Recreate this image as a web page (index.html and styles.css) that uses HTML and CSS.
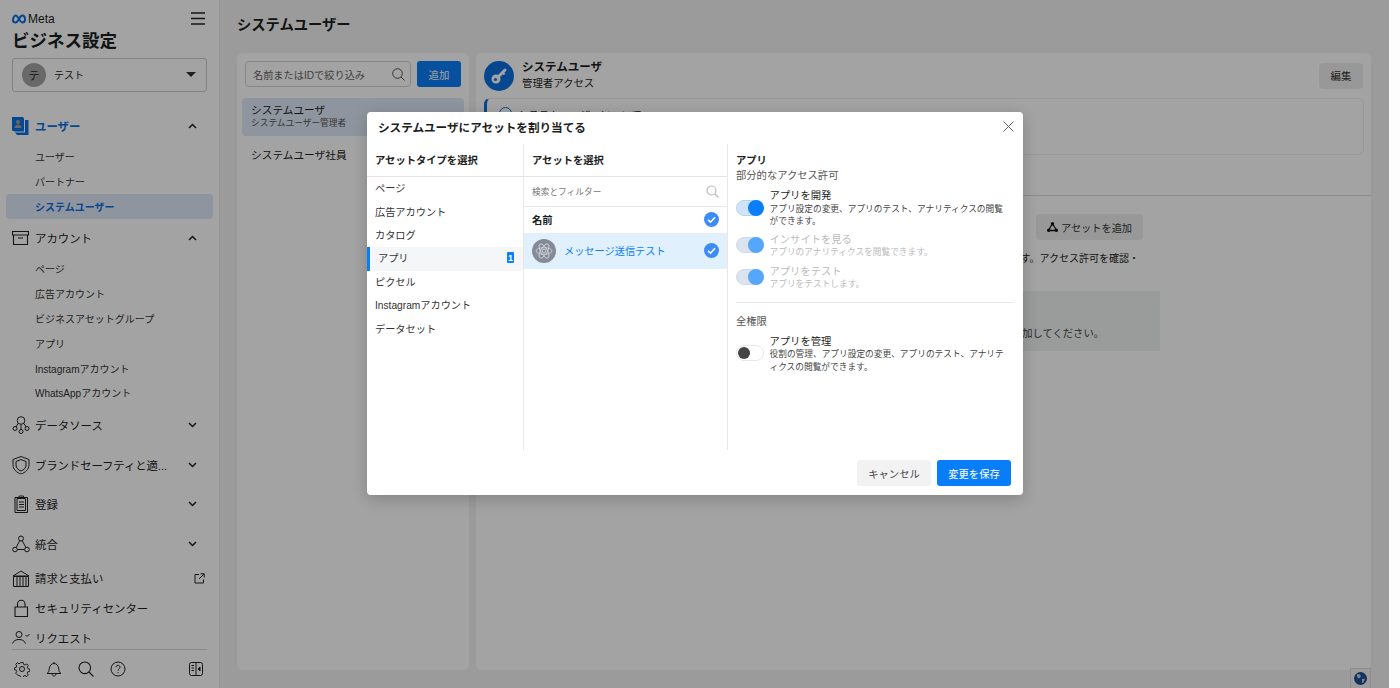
FILE: index.html
```html
<!DOCTYPE html>
<html lang="ja">
<head>
<meta charset="utf-8">
<title>ビジネス設定</title>
<link rel="stylesheet" href="styles.css">
</head>
<body>
<div class="page">
  <aside class="sidebar">
    <div class="brand-row">
      <div class="meta-logo">
        <svg width="14" height="10" viewBox="0 0 28 18" fill="none" stroke="#0a6fe0" stroke-width="4"><path d="M2 12c0-5 2.500-10 5.500-10 4.500 0 8 14 13 14 3 0 5.500-2 5.500-6s-2-8-5.500-8c-5 0-8.500 14-13 14C4 16 2 14.500 2 12z"/></svg>
        <span>Meta</span>
      </div>
      <svg class="burger" width="14" height="13" viewBox="0 0 14 13" stroke="#222" stroke-width="1.500"><path d="M0 1h14M0 6.500h14M0 12h14"/></svg>
    </div>
    <h1 class="app-title">ビジネス設定</h1>
    <div class="biz-select">
      <span class="avatar">テ</span>
      <span class="biz-name">テスト</span>
      <span class="caret"></span>
    </div>
    <nav class="nav">
      <div class="nav-head active">
        <svg class="nav-ico" width="17" height="19" viewBox="0 0 17 19"><path d="M0 .5h11l1 1.500v13H3l-3-1z" fill="#0a6fe0"/><path d="M13 3.500h3.500V18.500H5l-2-2.500h10z" fill="#0a6fe0"/><circle cx="6" cy="5.500" r="2" fill="#a3a3a3"/><path d="M2.500 11.500c0-2.200 1.700-3.500 3.500-3.500s3.500 1.300 3.500 3.500z" fill="#a3a3a3"/></svg>
        <span class="nav-label">ユーザー</span>
        <svg class="chev" width="9" height="6" viewBox="0 0 9 6" fill="none" stroke="#222" stroke-width="1.500"><path d="M1 5l3.500-3.500L8 5"/></svg>
      </div>
      <ul class="sub">
        <li>ユーザー</li>
        <li>パートナー</li>
        <li class="current">システムユーザー</li>
      </ul>
      <div class="nav-head">
        <svg class="nav-ico" width="17" height="14" viewBox="0 0 17 14" fill="none" stroke="#222" stroke-width="1.100"><path d="M.5.500h16v3.500H.5zM1.500 4v9.500h14V4M6 7h5"/></svg>
        <span class="nav-label">アカウント</span>
        <svg class="chev" width="9" height="6" viewBox="0 0 9 6" fill="none" stroke="#222" stroke-width="1.500"><path d="M1 5l3.500-3.500L8 5"/></svg>
      </div>
      <ul class="sub">
        <li>ページ</li>
        <li>広告アカウント</li>
        <li>ビジネスアセットグループ</li>
        <li>アプリ</li>
        <li>Instagramアカウント</li>
        <li>WhatsAppアカウント</li>
      </ul>
      <div class="nav-head tall">
        <svg class="nav-ico" width="18" height="19" viewBox="0 0 18 19" fill="none" stroke="#222" stroke-width="1"><circle cx="9" cy="5" r="3.800"/><circle cx="3" cy="13" r="2"/><circle cx="15" cy="13" r="2"/><circle cx="9" cy="16" r="2"/><path d="M6 8l-2 3.500M12 8l2 3.500M9 9v5"/></svg>
        <span class="nav-label">データソース</span>
        <svg class="chev" width="9" height="6" viewBox="0 0 9 6" fill="none" stroke="#222" stroke-width="1.500"><path d="M1 1l3.500 3.500L8 1"/></svg>
      </div>
      <div class="nav-head tall">
        <svg class="nav-ico" width="18" height="19" viewBox="0 0 18 19" fill="none" stroke="#222" stroke-width="1"><path d="M9 1l8 3v5c0 5-3.500 8-8 9.500C4.500 17 1 14 1 9V4z"/><path d="M9 4l5 2v3.500c0 3-2 4.800-5 6-3-1.200-5-3-5-6V6z"/></svg>
        <span class="nav-label ellipsis">ブランドセーフティと適...</span>
        <svg class="chev" width="9" height="6" viewBox="0 0 9 6" fill="none" stroke="#222" stroke-width="1.500"><path d="M1 1l3.500 3.500L8 1"/></svg>
      </div>
      <div class="nav-head tall">
        <svg class="nav-ico" width="18" height="19" viewBox="0 0 18 19" fill="none" stroke="#222" stroke-width="1"><path d="M3 3h12.500v15H3zM7 3V1.500h4.500V3"/><path d="M5 4h8.500v12H5zM7 7.500h5M7 10h5M7 12.500h5"/></svg>
        <span class="nav-label">登録</span>
        <svg class="chev" width="9" height="6" viewBox="0 0 9 6" fill="none" stroke="#222" stroke-width="1.500"><path d="M1 1l3.500 3.500L8 1"/></svg>
      </div>
      <div class="nav-head tall">
        <svg class="nav-ico" width="18" height="18" viewBox="0 0 18 18" fill="none" stroke="#222" stroke-width="1"><circle cx="9" cy="3.500" r="2.500"/><circle cx="3" cy="14.500" r="2.300"/><circle cx="15" cy="14.500" r="2.300"/><path d="M7.800 5.700l-3.700 6.800M10.200 5.700l3.700 6.800M5.300 14.500h7.400"/></svg>
        <span class="nav-label">統合</span>
        <svg class="chev" width="9" height="6" viewBox="0 0 9 6" fill="none" stroke="#222" stroke-width="1.500"><path d="M1 1l3.500 3.500L8 1"/></svg>
      </div>
      <div class="nav-head">
        <svg class="nav-ico" width="18" height="18" viewBox="0 0 18 18" fill="none" stroke="#222" stroke-width="1"><path d="M1 7l8-5 8 5zM1.500 7.500h15v10h-15zM5 8v9M8 8v9M11 8v9M14 8v9"/></svg>
        <span class="nav-label">請求と支払い</span>
        <svg class="ext" width="11" height="11" viewBox="0 0 11 11" fill="none" stroke="#222" stroke-width="1"><path d="M5 1.500H1v8.500h8.500V6.500M6.500.800h3.700v3.700M10 1L5 6"/></svg>
      </div>
      <div class="nav-head">
        <svg class="nav-ico" width="18" height="18" viewBox="0 0 18 18" fill="none" stroke="#222" stroke-width="1.100"><path d="M3 8h12.500v9.500H3zM5.500 8V5a3.700 3.700 0 0 1 7.500 0v3"/></svg>
        <span class="nav-label">セキュリティセンター</span>
      </div>
      <div class="nav-head">
        <svg class="nav-ico" width="18" height="14" viewBox="0 0 18 14" fill="none" stroke="#222" stroke-width="1"><circle cx="7" cy="3.500" r="3"/><path d="M.5 12.500c1-2.800 3.500-4 6.500-4s5.500 1.200 6.500 4M13.500 4l1.500 1.500L17.500 3"/></svg>
        <span class="nav-label">リクエスト</span>
      </div>
    </nav>
    <div class="side-foot">
      <svg class="foot-ico" width="16" height="16" viewBox="0 0 16 16" fill="none" stroke="#222" stroke-width="1"><circle cx="8" cy="8" r="2.500"/><path d="M6.800 1h2.400l.4 2 1.600.7 1.800-1.100 1.700 1.700-1.100 1.800.7 1.600 2 .4v2.400l-2 .4-.7 1.600 1.100 1.800-1.700 1.700-1.800-1.100-1.600.7-.4 2H6.800l-.4-2-1.600-.7L3 14.200l-1.700-1.700 1.100-1.800-.7-1.600-2-.4V6.800l2-.4.700-1.600L1.300 3 3 1.300l1.800 1.100 1.600-.7z" transform="translate(.5 .5) scale(.94)"/></svg>
      <svg class="foot-ico" width="16" height="16" viewBox="0 0 16 16" fill="none" stroke="#222" stroke-width="1"><path d="M1 12.500c1.500-1 2-2 2.200-4.500C3.500 4.500 5.500 2.500 8 2.500s4.500 2 4.800 5.500c.2 2.500.7 3.500 2.200 4.500zM8 2.500V1M6 12.500c0 1.500.8 2.500 2 2.500s2-1 2-2.500"/></svg>
      <svg class="foot-ico" width="16" height="16" viewBox="0 0 16 16" fill="none" stroke="#222" stroke-width="1.100"><circle cx="6.800" cy="6.800" r="5.800"/><path d="M11 11l4.500 4.500"/></svg>
      <svg class="foot-ico" width="16" height="16" viewBox="0 0 16 16" fill="none" stroke="#222" stroke-width="1"><circle cx="8" cy="8" r="7"/><path d="M6 6.200C6 5 7 4.300 8 4.300S10 5 10 6.200C10 7.800 8 7.800 8 9.500M8 11v1"/></svg>
      <svg class="foot-panel" width="14" height="14" viewBox="0 0 14 14" fill="none" stroke="#222" stroke-width="1"><rect x=".5" y=".5" width="13" height="13" rx="2"/><path d="M7 .5v13M2.500 3.500h2.500M2.500 6h2.500M2.500 8.500h2.500"/><path d="M11 5v4L9 7z" fill="#222"/></svg>
    </div>
  </aside>

  <main class="main">
    <h2 class="page-title">システムユーザー</h2>
    <div class="cards">
      <section class="card list-card">
        <div class="search-row">
          <div class="search-box">
            <span>名前またはIDで絞り込み</span>
            <svg width="13" height="13" viewBox="0 0 13 13" fill="none" stroke="#555" stroke-width="1"><circle cx="5.500" cy="5.500" r="4.800"/><path d="M9 9l3.500 3.500"/></svg>
          </div>
          <button class="btn-blue small">追加</button>
        </div>
        <div class="user-item selected">
          <div class="user-name">システムユーザ</div>
          <div class="user-role">システムユーザー管理者</div>
        </div>
        <div class="user-item">
          <div class="user-name">システムユーザ社員</div>
        </div>
      </section>
      <section class="card detail-card">
        <div class="detail-head">
          <span class="key-circle">
            <svg width="18" height="18" viewBox="0 0 18 18"><path d="M7 11L15 3" stroke="#fff" stroke-width="3" stroke-linecap="round"/><path d="M12.500 5.500l2 2" stroke="#fff" stroke-width="2"/><circle cx="6" cy="12" r="4.500" fill="#fff"/><circle cx="5.500" cy="12.500" r="1.500" fill="#0a6fe0"/></svg>
          </span>
          <div class="detail-name">
            <div class="detail-title">システムユーザ</div>
            <div class="detail-sub">管理者アクセス</div>
          </div>
          <button class="btn-soft edit">編集</button>
        </div>
        <div class="info-box">
          <span class="info-dot"></span>
          <span>システムユーザーについて</span>
        </div>
        <div class="tabs"></div>
        <div class="assets">
          <div class="assets-bar">
            <button class="btn-soft add-asset">
              <svg width="11" height="10" viewBox="0 0 11 10" fill="#111"><path d="M5.500 1.500L1.500 8.500h8z" fill="none" stroke="#111" stroke-width="1.300"/><circle cx="5.500" cy="1.700" r="1.700"/><circle cx="1.700" cy="8.300" r="1.700"/><circle cx="9.300" cy="8.300" r="1.700"/></svg>
              <span>アセットを追加</span>
            </button>
          </div>
          <p class="assets-note">このシステムユーザーがアクセスできるアセットを表示しています。アクセス許可を確認・</p>
          <div class="empty-box">このシステムユーザーにはまだアセットがありません。アセットを追加してください。</div>
        </div>
      </section>
    </div>
    <div class="lang-tab">
      <svg width="13" height="13" viewBox="0 0 13 13"><circle cx="6.500" cy="6.500" r="6.500" fill="#1f4f96"/><path d="M3 2l3 .5 1 2-2 2-2-1.500zM8 7l3-.5-1.500 4-1.500.5z" fill="#c4cbd6"/></svg>
    </div>
  </main>

  <div class="scrim"></div>

  <div class="modal" role="dialog">
    <header class="modal-head">
      <h3>システムユーザにアセットを割り当てる</h3>
      <svg width="11" height="11" viewBox="0 0 11 11" stroke="#666" stroke-width="1"><path d="M.5.500l10 10M10.500.500l-10 10"/></svg>
    </header>
    <div class="modal-body">
      <div class="col col-types">
        <div class="col-title">アセットタイプを選択</div>
        <ul class="type-list">
          <li>ページ</li>
          <li>広告アカウント</li>
          <li>カタログ</li>
          <li class="picked"><span>アプリ</span><b class="count">1</b></li>
          <li>ピクセル</li>
          <li>Instagramアカウント</li>
          <li>データセット</li>
        </ul>
      </div>
      <div class="col col-assets">
        <div class="col-title">アセットを選択</div>
        <div class="filter">
          <span>検索とフィルター</span>
          <svg width="13" height="13" viewBox="0 0 13 13" fill="none" stroke="#bbb" stroke-width="1.200"><circle cx="5.500" cy="5.500" r="4.500"/><path d="M9 9l3.500 3.500"/></svg>
        </div>
        <div class="asset-head">
          <span>名前</span>
          <svg class="check" width="15" height="15" viewBox="0 0 15 15"><circle cx="7.500" cy="7.500" r="7.500" fill="#3b8cf5"/><path d="M4 7.800l2.500 2.400L11 5.300" fill="none" stroke="#fff" stroke-width="1.600"/></svg>
        </div>
        <div class="asset-row">
          <span class="atom">
            <svg width="18" height="18" viewBox="0 0 18 18" fill="none" stroke="#d5d8de" stroke-width=".8"><circle cx="9" cy="9" r="1.800"/><ellipse cx="9" cy="9" rx="8" ry="3.300"/><ellipse cx="9" cy="9" rx="8" ry="3.300" transform="rotate(60 9 9)"/><ellipse cx="9" cy="9" rx="8" ry="3.300" transform="rotate(120 9 9)"/></svg>
          </span>
          <span class="asset-name">メッセージ送信テスト</span>
          <svg class="check" width="15" height="15" viewBox="0 0 15 15"><circle cx="7.500" cy="7.500" r="7.500" fill="#3b8cf5"/><path d="M4 7.800l2.500 2.400L11 5.300" fill="none" stroke="#fff" stroke-width="1.600"/></svg>
        </div>
      </div>
      <div class="col col-perms">
        <div class="perm-title">アプリ</div>
        <div class="perm-group">部分的なアクセス許可</div>
        <div class="perm">
          <span class="toggle on"><i></i></span>
          <div class="perm-text">
            <div class="perm-name">アプリを開発</div>
            <div class="perm-desc">アプリ設定の変更、アプリのテスト、アナリティクスの閲覧ができます。</div>
          </div>
        </div>
        <div class="perm muted first-muted">
          <span class="toggle on"><i></i></span>
          <div class="perm-text">
            <div class="perm-name">インサイトを見る</div>
            <div class="perm-desc">アプリのアナリティクスを閲覧できます。</div>
          </div>
        </div>
        <div class="perm muted">
          <span class="toggle on"><i></i></span>
          <div class="perm-text">
            <div class="perm-name">アプリをテスト</div>
            <div class="perm-desc">アプリをテストします。</div>
          </div>
        </div>
        <hr class="perm-rule">
        <div class="perm-group">全権限</div>
        <div class="perm">
          <span class="toggle"><i></i></span>
          <div class="perm-text">
            <div class="perm-name">アプリを管理</div>
            <div class="perm-desc">役割の管理、アプリ設定の変更、アプリのテスト、アナリティクスの閲覧ができます。</div>
          </div>
        </div>
      </div>
    </div>
    <footer class="modal-foot">
      <button class="btn-cancel">キャンセル</button>
      <button class="btn-save">変更を保存</button>
    </footer>
  </div>
</div>
<div class="edge"></div>
</body>
</html>
```

FILE: styles.css
```css
* { box-sizing: border-box; }
html, body { margin: 0; height: 100%; overflow: hidden; }
body {
  display: flex;
  background: #fff;
  color: #1c1e21;
  font-family: "Liberation Sans", "Noto Sans CJK JP", sans-serif;
  font-size: 10.4px;
}
ul { list-style: none; margin: 0; padding: 0; }
button { font-family: inherit; border: 0; padding: 0; }
h1, h2, h3, p { margin: 0; }

.page {
  position: relative;
  width: 1389px;
  height: 688px;
  flex: none;
  display: flex;
  background: #f2f2f2;
  overflow: hidden;
}
.edge { flex: 1; background: #fdfdfd; }
.scrim { position: absolute; inset: 0; background: rgba(0, 0, 0, .36); }

/* Sidebar */
.sidebar {
  width: 220px;
  flex: none;
  height: 688px;
  display: flex;
  flex-direction: column;
  background: #fff;
  border-right: 1px solid #e6e6e6;
  overflow: hidden;
}
.brand-row {
  display: flex;
  align-items: center;
  justify-content: space-between;
  height: 13px;
  margin: 12px 14px 0 12px;
}
.meta-logo { display: flex; align-items: center; gap: 2px; font-size: 12px; }
.app-title {
  margin: 5px 0 0 12px;
  font-size: 17.500px;
  line-height: 22px;
  font-weight: 700;
}
.biz-select {
  display: flex;
  align-items: center;
  height: 35px;
  margin: 6px 12px 0;
  padding: 0 10px 0 9px;
  border: 1px solid #ccc;
  border-radius: 3px;
}
.avatar {
  width: 24px;
  height: 24px;
  display: flex;
  align-items: center;
  justify-content: center;
  border-radius: 50%;
  background: #a4a4a4;
  font-size: 11px;
}
.biz-name { flex: 1; margin-left: 8px; font-size: 10px; }
.caret {
  width: 0;
  height: 0;
  border-left: 5px solid transparent;
  border-right: 5px solid transparent;
  border-top: 5px solid #333;
}
.nav { height: 538px; margin-top: 19px; overflow: hidden; flex: none; }
.nav-head {
  position: relative;
  display: flex;
  align-items: center;
  height: 30px;
  padding: 0 22px 0 12px;
  font-size: 11.400px;
}
.nav-head.tall { height: 39.500px; }
.nav-ico { flex: none; position: absolute; left: 12px; top: 50%; transform: translateY(-50%); }
.nav-label { flex: 1; margin-left: 23px; }
.nav-head.active { color: #0a6fe0; font-weight: 700; }
.ellipsis { letter-spacing: -.1px; }
.ext { margin-right: -8px; }
.sub { margin: 3.500px 0 0; }
.sub + .nav-head { margin-top: 4.500px; }
.sub + .nav-head.tall { margin-top: 0; }
.sub li {
  display: flex;
  align-items: center;
  height: 24.800px;
  margin: 0 6px;
  padding-left: 29px;
  font-size: 10px;
  color: #333;
  border-radius: 4px;
}
.sub li.current { background: #dfe9f8; color: #0a6fe0; font-weight: 700; }
.side-foot {
  display: flex;
  align-items: center;
  height: 41px;
  margin: 0 12px;
  padding: 0 2px 0 2px;
  gap: 16px;
  border-top: 1px solid #d8d8d8;
}
.foot-panel { margin-left: auto; margin-right: 2px; }

/* Main */
.main {
  position: relative;
  flex: 1;
  padding: 0 18px 0 17px;
}
.page-title {
  height: 53px;
  padding-top: 15px;
  font-size: 14.300px;
  line-height: 20px;
  font-weight: 700;
}
.cards { display: flex; gap: 7px; height: 617px; }
.card { background: #fff; border-radius: 6px; overflow: hidden; }
.list-card { width: 232px; flex: none; padding: 8px 5px; }
.search-row { display: flex; gap: 6px; padding: 0 3px; }
.search-box {
  flex: 1;
  height: 26px;
  display: flex;
  align-items: center;
  justify-content: space-between;
  padding: 0 5px 0 7px;
  border: 1px solid #d4d4d4;
  border-radius: 4px;
  color: #666;
  font-size: 10.200px;
}
.btn-blue {
  background: #0a7df8;
  color: #fff;
  border-radius: 3px;
}
.btn-blue.small { width: 44px; height: 26px; font-size: 10.400px; }
.user-item { padding: 0 9px; font-size: 10.700px; }
.user-item.selected {
  height: 38px;
  margin-top: 11px;
  padding-top: 6px;
  background: #dfe9f8;
  border-radius: 4px;
}
.user-item.selected + .user-item { margin-top: 13px; }
.user-name { line-height: 13px; }
.user-role { line-height: 13px; font-size: 8.700px; color: #555; }

.detail-card { flex: 1; display: flex; flex-direction: column; }
.detail-head {
  display: flex;
  align-items: center;
  gap: 8px;
  height: 45px;
  padding: 0 8px;
}
.key-circle {
  width: 30px;
  height: 30px;
  border-radius: 50%;
  background: #0a6fe0;
  display: flex;
  align-items: center;
  justify-content: center;
}
.detail-name { flex: 1; }
.detail-title { font-size: 11.500px; font-weight: 700; line-height: 15px; }
.detail-sub { font-size: 10.400px; line-height: 17px; }
.btn-soft { background: #eeeeee; border-radius: 4px; color: #333; font-size: 10.400px; }
.edit { width: 44px; height: 26px; }
.info-box {
  display: flex;
  align-items: flex-start;
  gap: 6px;
  height: 57px;
  margin: 0 7px 0 8px;
  padding: 8px 12px;
  border: 1px solid #eee;
  border-left: 3px solid #0a6fe0;
  border-radius: 6px;
}
.info-dot { width: 13px; height: 13px; border: 1.500px solid #0a6fe0; border-radius: 50%; }
.tabs { height: 41px; border-bottom: 1px solid #d9d9d9; }
.assets { padding: 18px 0 0 8px; position: relative; }
.assets-bar { display: flex; justify-content: flex-end; padding-right: 228px; }
.add-asset {
  width: 107px;
  height: 26px;
  display: flex;
  align-items: center;
  justify-content: center;
  gap: 3px;
  font-size: 10.200px;
}
.assets-note {
  margin-top: 11.500px;
  height: 14px;
  padding-right: 232px;
  text-align: right;
  font-size: 10px;
  line-height: 14px;
  white-space: nowrap;
}
.empty-box {
  width: 676px;
  height: 60px;
  margin-top: 25px;
  padding: 36px 56px 0 0;
  text-align: right;
  font-size: 10.300px;
  line-height: 14px;
  white-space: nowrap;
  background: #f1f4f3;
  border-radius: 2px;
  color: #444;
}
.lang-tab {
  position: absolute;
  right: 18px;
  bottom: 0;
  width: 21px;
  height: 20px;
  display: flex;
  align-items: center;
  justify-content: center;
  background: #f5f5f5;
  border: 1px solid #ddd;
  border-bottom: 0;
}

/* Modal */
.modal {
  position: absolute;
  left: 367px;
  top: 112px;
  width: 656px;
  height: 383px;
  display: flex;
  flex-direction: column;
  background: #fff;
  border-radius: 4px;
  box-shadow: 0 4px 16px rgba(0, 0, 0, .2);
}
.modal-head {
  display: flex;
  align-items: center;
  justify-content: space-between;
  height: 32px;
  padding: 0 9px 3px 11px;
}
.modal-head h3 { font-size: 11.600px; font-weight: 700; }
.modal-body { display: flex; height: 306px; }
.col { flex: none; height: 306px; }
.col-types { width: 157px; border-right: 1px solid #e8e8e8; }
.col-assets { width: 204px; border-right: 1px solid #e8e8e8; }
.col-perms { width: 295px; padding: 9px 9px 0 8px; }
.col-title {
  display: flex;
  align-items: center;
  height: 33px;
  padding: 0 0 2px 8px;
  border-bottom: 1px solid #e4e4e4;
  font-size: 10.300px;
  font-weight: 700;
}
.type-list li {
  display: flex;
  align-items: center;
  justify-content: space-between;
  height: 23.400px;
  padding: 0 9px 2px 8px;
  font-size: 10.200px;
  color: #333;
}
.type-list li.picked {
  background: #f5f6f7;
  border-left: 3px solid #0a7df8;
  padding-left: 8px;
}
.count {
  width: 7px;
  height: 11px;
  display: flex;
  align-items: center;
  justify-content: center;
  background: #0a7df8;
  color: #fff;
  font-size: 9px;
  border-radius: 1px;
}
.filter {
  display: flex;
  align-items: center;
  justify-content: space-between;
  height: 30px;
  padding: 0 8px 0 8px;
  border-bottom: 1px solid #e8e8e8;
  font-size: 8.700px;
  color: #777;
}
.asset-head {
  display: flex;
  align-items: center;
  justify-content: space-between;
  height: 26px;
  padding: 0 8px 1px 8px;
  font-size: 10.300px;
  font-weight: 700;
}
.asset-row {
  display: flex;
  align-items: center;
  height: 36px;
  padding: 0 8px 1px 8px;
  background: #e1f0fd;
}
.atom {
  width: 24px;
  height: 24px;
  border-radius: 50%;
  background: #858b96;
  display: flex;
  align-items: center;
  justify-content: center;
}
.asset-name { flex: 1; margin-left: 8px; color: #0a7df8; font-size: 10.200px; }
.perm-title { font-size: 10.300px; font-weight: 700; line-height: 15px; }
.perm-group { font-size: 10.300px; line-height: 15px; color: #555; }
.perm {
  display: flex;
  align-items: center;
  gap: 5.500px;
  margin-top: 7px;
}
.perm.first-muted { margin-top: 6px; }
.perm-text { width: 238px; }
.perm-name { font-size: 10.300px; line-height: 12.500px; }
.perm-desc { font-size: 8.700px; line-height: 12.500px; color: #444; }
.perm.muted .perm-name, .perm.muted .perm-desc { color: #bbb; }
.toggle {
  position: relative;
  width: 28px;
  height: 16px;
  margin-bottom: 2px;
  flex: none;
  background: #fff;
  border: 1px solid #e8e8e8;
  border-radius: 8px;
}
.toggle i {
  position: absolute;
  left: 1px;
  top: 1px;
  width: 12px;
  height: 12px;
  background: #444;
  border-radius: 50%;
}
.toggle.on { background: #cfe3fa; border-color: #b7d4f5; }
.toggle.on i { left: auto; right: -1px; top: -1px; width: 16px; height: 16px; background: #0a7df8; }
.muted .toggle.on { background: #dbe3ee; border-color: #d2dbe7; }
.muted .toggle.on i { background: #55a6fd; }
.perm-rule { margin: 11px 0 11px; border: 0; border-top: 1px solid #e8e8e8; }
.modal-foot {
  display: flex;
  justify-content: flex-end;
  gap: 6px;
  padding: 10px 12px 0 0;
}
.btn-cancel, .btn-save { width: 74px; height: 26px; border-radius: 3px; font-size: 10.300px; }
.btn-cancel { background: #f2f2f2; color: #444; }
.btn-save { background: #0a7df8; color: #fff; }
```
